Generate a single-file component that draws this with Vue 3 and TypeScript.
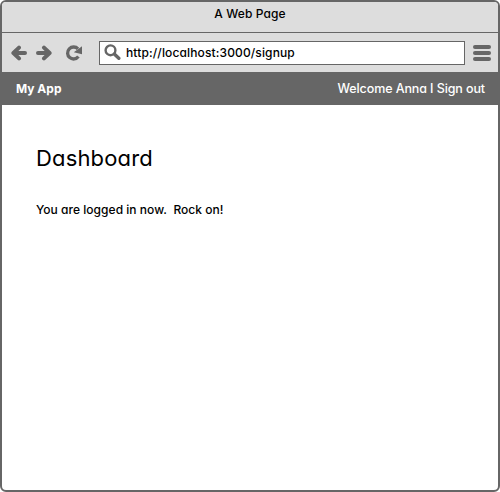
<script setup lang="ts">
const title: string = 'A Web Page'
const address: string = 'http://localhost:3000/signup'
const userName: string = 'Anna'
</script>

<template>
  <div class="window">
    <header class="titlebar"><span class="title">{{ title }}</span></header>
    <div class="toolbar">
      <svg class="arrow" viewBox="0 0 16 16"><path d="M14 8H3M8 2.6L2.4 8L8 13.4" /></svg>
      <svg class="arrow forward" viewBox="0 0 16 16"><path d="M2 8H13M8 2.6L13.6 8L8 13.4" /></svg>
      <svg class="reload" viewBox="0 0 18 16">
        <path class="ring" d="M13 3.9A6 6 0 1 0 13.4 11.6" />
        <path class="tip" d="M17 1.2V9.2L8.8 7.2Z" />
      </svg>
      <div class="address">
        <svg class="search" viewBox="0 0 17 17"><circle cx="6.5" cy="6.3" r="4.9" /><path d="M10.3 10.1L14.8 14.3" /></svg>
        <span class="url">{{ address }}</span>
      </div>
      <div class="menu"><i></i><i></i><i></i></div>
    </div>
    <nav class="appbar">
      <span class="brand">My App</span>
      <span class="user">Welcome {{ userName }} <span class="divider">I</span> Sign out</span>
    </nav>
    <main class="content">
      <h1>Dashboard</h1>
      <p>You are logged in now.&nbsp; Rock on!</p>
    </main>
  </div>
</template>

<style>
body {
  margin: 0;
  background: #fff;
}
</style>

<style scoped>
.window {
  box-sizing: border-box;
  width: 500px;
  height: 492px;
  border: 2px solid #666;
  border-radius: 6px;
  overflow: hidden;
  background: #fff;
  color: #000;
  font-family: Inter, "Liberation Sans", sans-serif;
  font-feature-settings: "cv11", "calt" 0;
  font-size: 12px;
  font-weight: 450;
  line-height: 18px;
  white-space: nowrap;
}
.titlebar {
  box-sizing: border-box;
  height: 31px;
  padding-top: 3px;
  border-bottom: 1px solid #666;
  background: #ddd;
  text-align: center;
}
.title {
  letter-spacing: 0.1px;
}
.toolbar {
  display: flex;
  align-items: center;
  height: 39px;
  padding: 0 6px 0 9px;
  box-sizing: border-box;
  background: #ddd;
}
.toolbar svg {
  flex: none;
  fill: none;
  stroke: #666;
}
.arrow {
  width: 16px;
  height: 16px;
  stroke-width: 4;
  stroke-linecap: round;
  stroke-linejoin: round;
}
.forward {
  margin-left: 9px;
}
.reload {
  width: 18px;
  height: 16px;
  margin-left: 13px;
}
.ring {
  stroke-width: 3.3;
}
.reload .tip {
  fill: #666;
  stroke: none;
}
.address {
  display: flex;
  align-items: center;
  box-sizing: border-box;
  width: 366px;
  height: 24px;
  margin-left: 16px;
  padding-left: 4px;
  border: 1px solid #666;
  background: #fff;
}
.search {
  width: 17px;
  height: 17px;
}
.search circle {
  stroke-width: 2.4;
}
.search path {
  stroke-width: 3.4;
  stroke-linecap: round;
}
.url {
  margin-left: 5px;
  letter-spacing: 0.13px;
}
.menu {
  display: flex;
  flex-direction: column;
  gap: 2px;
  width: 18px;
  margin-left: 8px;
}
.menu i {
  height: 4px;
  border-radius: 2px;
  background: #666;
}
.appbar {
  display: flex;
  justify-content: space-between;
  height: 33px;
  padding: 8px 13px 0 14px;
  box-sizing: border-box;
  background: #666;
  color: #fff;
}
.brand {
  font-weight: 700;
}
.user {
  font-size: 12.5px;
  font-weight: 550;
  letter-spacing: -0.1px;
}
.content {
  padding: 38px 34px 0;
}
h1 {
  margin: 0;
  font-size: 22px;
  font-weight: 400;
  line-height: 30px;
  letter-spacing: 0.15px;
}
p {
  margin: 28px 0 0;
  letter-spacing: 0.03px;
}
</style>
